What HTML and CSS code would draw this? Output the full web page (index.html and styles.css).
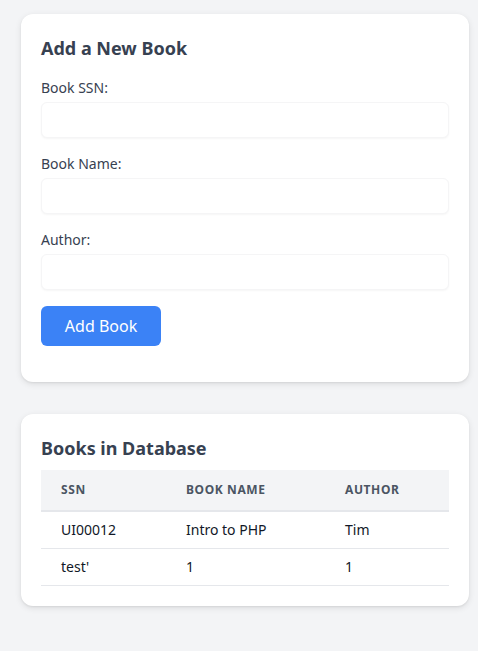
FILE: index.html
```html
<!DOCTYPE html>
<html>
<head>
<meta charset="utf-8">
<link rel="stylesheet" href="styles.css">
</head>
<body>
<main class="page">
  <section class="card">
    <h2 class="card-title">Add a New Book</h2>
    <form class="form">
      <div class="field">
        <label class="label">Book SSN:</label>
        <input class="input" type="text">
      </div>
      <div class="field">
        <label class="label">Book Name:</label>
        <input class="input" type="text">
      </div>
      <div class="field">
        <label class="label">Author:</label>
        <input class="input" type="text">
      </div>
      <button class="btn" type="button">Add Book</button>
    </form>
  </section>
  <section class="card card-table">
    <h2 class="card-title">Books in Database</h2>
    <table class="table">
      <thead>
        <tr><th class="c1">SSN</th><th class="c2">Book Name</th><th class="c3">Author</th></tr>
      </thead>
      <tbody>
        <tr><td>UI00012</td><td>Intro to PHP</td><td>Tim</td></tr>
        <tr><td>test'</td><td>1</td><td>1</td></tr>
      </tbody>
    </table>
  </section>
</main>
</body>
</html>
```
FILE: styles.css
```css
* { box-sizing: border-box; }
html, body { margin: 0; padding: 0; }
body {
  background: #f3f4f6;
  font-family: "Noto Sans", "Open Sans", sans-serif;
  color: #374151;
}
.page {
  padding: 14px 9px 20px 21px;
  display: flex;
  flex-direction: column;
  gap: 32px;
}
.card {
  background: #fff;
  border-radius: 12px;
  box-shadow: 0 2px 6px rgba(0,0,0,0.10), 0 1px 2px rgba(0,0,0,0.06);
  padding: 20px 20px 36px;
}
.card-table { padding-bottom: 20px; }
.card-title {
  margin: 0;
  font-size: 18px;
  line-height: 28px;
  font-weight: 700;
  color: #374151;
}
.form { margin-top: 16px; }
.field { margin-bottom: 16px; }
.label {
  display: block;
  font-size: 14px;
  line-height: 20px;
  color: #374151;
  margin-bottom: 4px;
}
.input {
  display: block;
  width: 100%;
  height: 36px;
  border: 1px solid #f5f5f6;
  border-radius: 6px;
  box-shadow: 0 1px 2px rgba(0,0,0,0.04);
  background: #fff;
  font-family: inherit;
  font-size: 14px;
  padding: 8px 12px;
}
.btn {
  display: block;
  margin-top: 16px;
  width: 120px;
  height: 40px;
  border: none;
  border-radius: 6px;
  background: #3b82f6;
  color: #fff;
  font-family: inherit;
  font-size: 16px;
}
.table {
  margin-top: 8px;
  width: 100%;
  border-collapse: collapse;
}
.table th {
  background: #f3f4f6;
  text-align: left;
  font-size: 12px;
  line-height: 16px;
  font-weight: 700;
  letter-spacing: 0.05em;
  text-transform: uppercase;
  color: #4b5563;
  padding: 12px 20px;
  border-bottom: 2px solid #e5e7eb;
}
.c1 { width: 125px; }
.c2 { width: 159px; }
.table td {
  font-size: 14px;
  line-height: 20px;
  color: #111827;
  padding: 8px 20px;
  border-bottom: 1px solid #e5e7eb;
}
```
